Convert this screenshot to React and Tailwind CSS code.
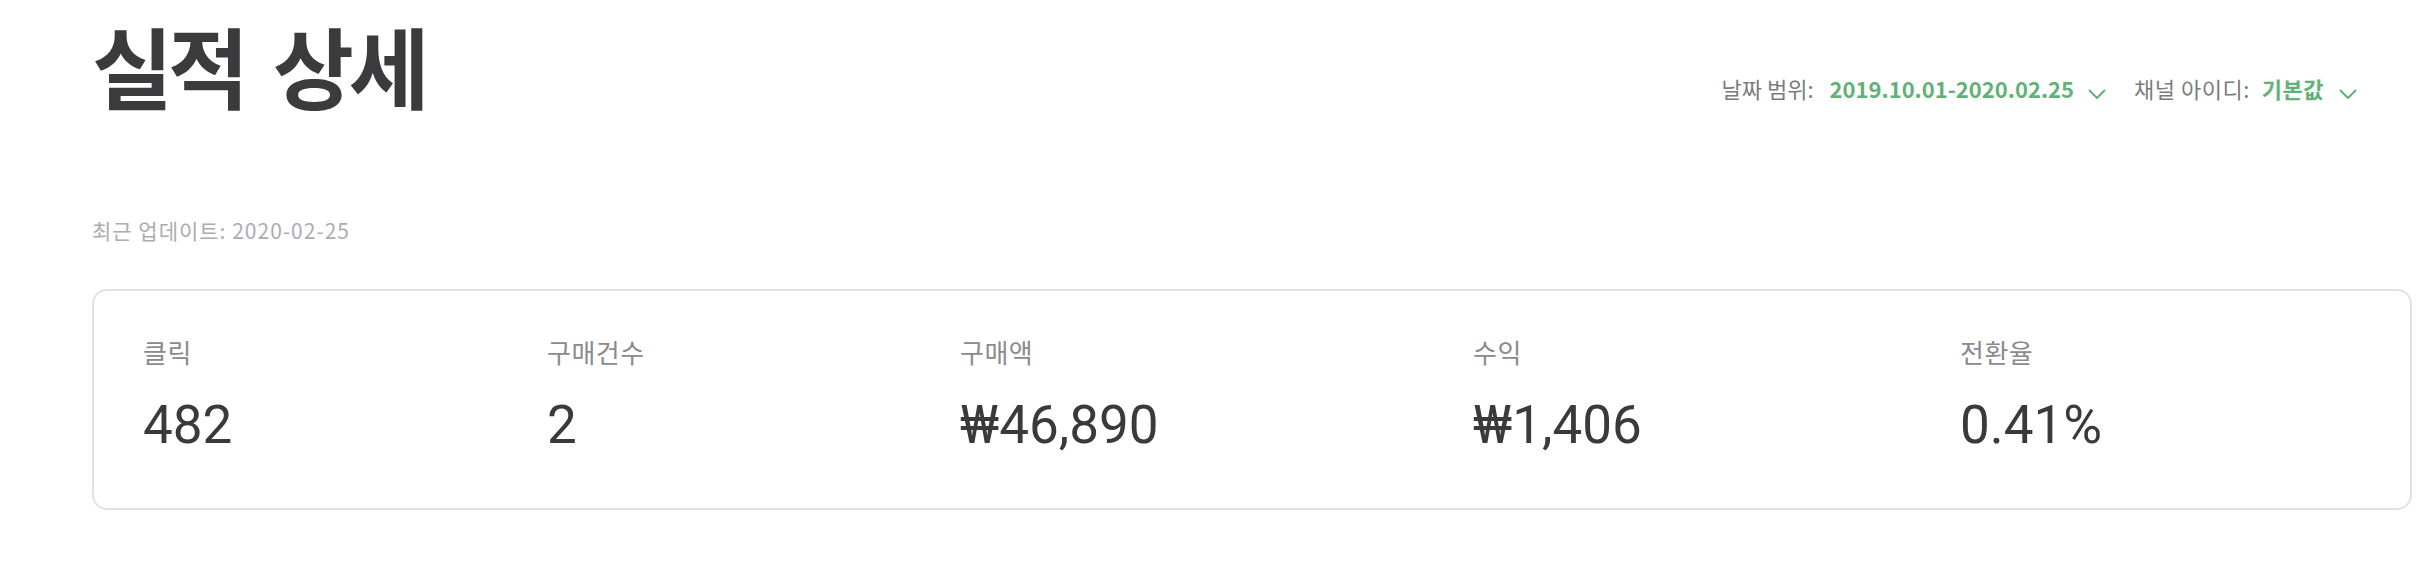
import React from "react";

const stats = [
    { label: "클릭", value: "482", width: "w-[404px]" },
    { label: "구매건수", value: "2", width: "w-[413px]" },
    { label: "구매액", value: "₩46,890", width: "w-[513px]" },
    { label: "수익", value: "₩1,406", width: "w-[487px]" },
    { label: "전환율", value: "0.41%", width: "flex-1" },
];

const Chevron = () => (
    <svg width="18" height="10" viewBox="0 0 18 10" className="mt-[12px]">
        <polyline points="1,1 9,9 17,1" fill="none" stroke="#62b277" strokeWidth="2" />
    </svg>
);

const App = () => {
    return (
        <div className="w-[2436px] h-[578px] bg-white pl-[92px] pt-[20px] font-['Noto_Sans_CJK_KR',sans-serif]">
            {/* Header */}
            <div className="flex justify-between items-start pr-[79px]">
                <h1 className="text-[88px] leading-none font-bold tracking-[-5px] [word-spacing:14px] text-[#3b3b3d]">실적 상세</h1>
                <div className="flex items-start mt-[57px] text-[22px] leading-none">
                    <span className="text-[#7b7b7e]">날짜 범위:</span>
                    <span className="ml-[16px] font-bold text-[#62b277]">2019.10.01-2020.02.25</span>
                    <span className="ml-[14px]"><Chevron /></span>
                    <span className="ml-[28px] text-[#7b7b7e] tracking-[0.5px]">채널 아이디:</span>
                    <span className="ml-[12px] font-bold text-[#62b277] tracking-[0.5px]">기본값</span>
                    <span className="ml-[15px]"><Chevron /></span>
                </div>
            </div>

            <p className="mt-[112px] text-[21px] leading-none tracking-[1px] text-[#acacb0]">최근 업데이트: 2020-02-25</p>

            {/* Stats card */}
            <div className="mt-[48px] w-[2320px] border-2 border-[#e2e2e2] rounded-[15px] pl-[49px] pt-[48px] pb-[56px] flex">
                {stats.map((s) => (
                    <div key={s.label} className={s.width}>
                        <div className="text-[26px] leading-none tracking-[0.5px] text-[#8a8a8d]">{s.label}</div>
                        <div className="mt-[34px] text-[53px] leading-none text-[#3a3a3c] font-['Roboto','Noto_Sans_CJK_KR',sans-serif]">{s.value}</div>
                    </div>
                ))}
            </div>
        </div>
    );
};

export default App;
